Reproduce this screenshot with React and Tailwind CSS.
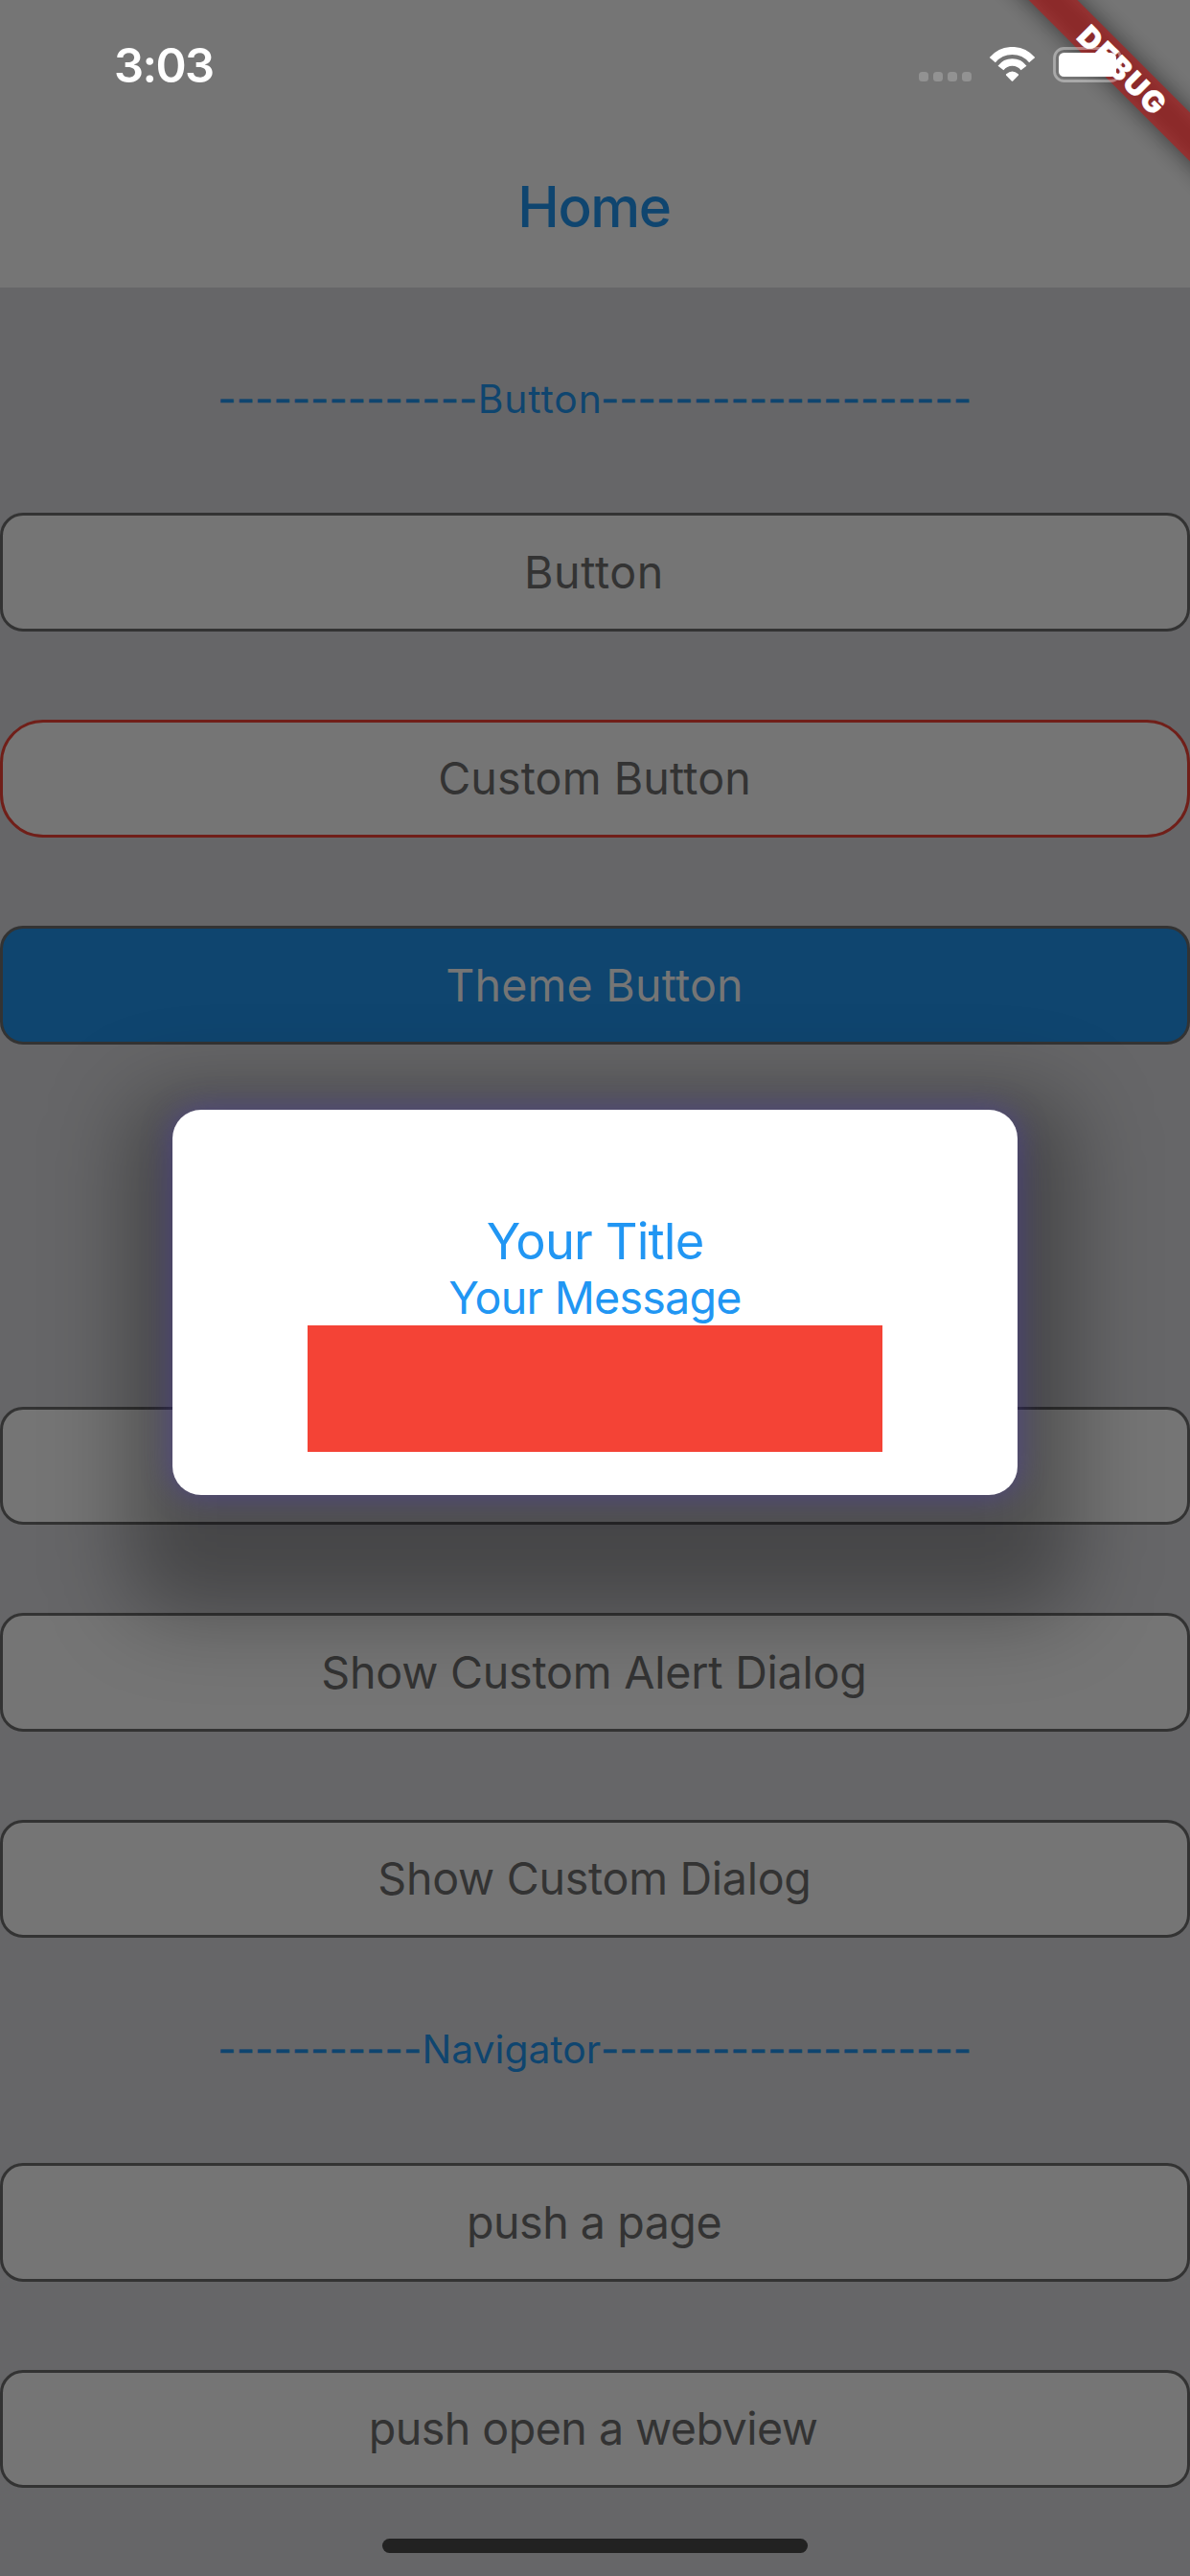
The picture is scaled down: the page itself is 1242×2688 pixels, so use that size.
function StatusBar() {
  return (
    <div className="flex h-[136px] justify-between pl-[119px] pr-[66px]">
      <span className="h-[136px] pt-px text-[48.8px] leading-[136px] font-semibold tracking-[-1.6px] text-white">3:03</span>
      <div className="flex pt-[49px]">
        <div className="mt-[26px] flex gap-[5px]">
          {[0, 1, 2, 3].map((dot) => (
            <span key={dot} className="size-[10px] rounded-[3.5px] bg-[#929292]" />
          ))}
        </div>
        <svg className="relative z-20 ml-[18px] h-[38px] w-[49px]" viewBox="0 0 49 38" fill="none">
          <path d="M3.8 13.6 A27 27 0 0 1 45.2 13.6" stroke="#fff" strokeWidth="8" />
          <path d="M12.5 22 A15 15 0 0 1 36.5 22" stroke="#fff" strokeWidth="7.4" />
          <path d="M18.2 28.2 Q24.5 22.6 30.8 28.2 Q31.5 29 30.8 29.8 L25.2 35.4 Q24.5 36 23.8 35.4 L18.2 29.8 Q17.5 29 18.2 28.2 Z" fill="#fff" />
        </svg>
        <svg className="relative z-20 ml-[18px] h-[37px] w-[77px]" viewBox="0 0 77 37" fill="none">
          <rect x="1.5" y="1.5" width="69" height="34" rx="10" stroke="#fff" strokeOpacity="0.38" strokeWidth="2.8" />
          <rect x="6" y="6" width="60" height="25" rx="5.5" fill="#fff" />
        </svg>
      </div>
    </div>
  );
}

function DebugBanner() {
  return (
    <div className="absolute top-0 right-0 z-10 size-[300px] overflow-hidden">
      <div className="absolute top-[53.2px] left-[-22.4px] h-[36px] w-[500px] rotate-45">
        <div className="absolute inset-0 bg-black/50 blur-[12px]" />
        <div className="absolute inset-0 flex items-center justify-center bg-[#B71C1C]/63 pl-[6px] text-[31px] leading-none font-black tracking-[1.9px] text-white [-webkit-text-stroke:0.4px_#fff]">
          DEBUG
        </div>
      </div>
    </div>
  );
}

function Section({ left, title, right, titleClass }) {
  return (
    <div className="flex h-[235px] items-center justify-center pb-px text-[40.8px] whitespace-nowrap text-[#0f456f]">
      <span className="tracking-[0.6px] [-webkit-text-stroke:0.6px_#0f456f]">{left}</span>
      <span className={titleClass}>{title}</span>
      <span className="tracking-[0.6px] [-webkit-text-stroke:0.6px_#0f456f]">{right}</span>
    </div>
  );
}

function Button({ children, className = "rounded-[24px] border-[#333333] bg-[#757575] text-[#333333]", tracking }) {
  return (
    <button className={"flex h-[123.5px] w-full shrink-0 items-center justify-center border-3 pt-[2px] text-[46.6px] whitespace-nowrap " + className}>
      <span className={tracking}>{children}</span>
    </button>
  );
}

function Dialog() {
  return (
    <>
      <div className="absolute top-[1142px] left-[132px] h-[543px] w-[990px] rounded-[50px] bg-black/31 blur-[43px]" />
      <div className="absolute inset-x-[180px] top-[1158px] flex h-[402px] flex-col items-center rounded-[30px] bg-white pt-[105px] text-[#2196f3] shadow-[0_0_30px_2px_rgba(80,60,183,0.48)]">
        <h2 className="h-[64px] text-[52.4px] leading-[64px] tracking-[-0.86px]">Your Title</h2>
        <p className="h-[56px] text-[46.6px] leading-[54px] tracking-[-0.76px]">Your Message</p>
        <div className="h-[132px] w-[600px] bg-[#f44336]" />
      </div>
    </>
  );
}

export default function App() {
  return (
    <div className="relative h-[2688px] w-[1242px] overflow-hidden bg-[#666668] font-[Inter,sans-serif]">
      <header className="h-[300px] bg-[#757575]">
        <StatusBar />
        <h1 className="h-[160px] pr-[2px] text-center text-[58.4px] leading-[160px] font-medium tracking-[-1.4px] text-[#0f456f]">Home</h1>
      </header>
      <Section left="--------------" title="Button" right="--------------------" titleClass="mr-[-1.5px] tracking-[0.88px]" />
      <div className="flex flex-col gap-[92px]">
        <Button tracking="pr-[2px] tracking-[0.6px]">Button</Button>
        <Button className="rounded-[45px] border-[#701f19] bg-[#757575] text-[#333333]" tracking="pr-[1px] tracking-[0.11px]">Custom Button</Button>
        <Button className="rounded-[24px] border-[#333333] bg-[#0f456f] text-[#757575]" tracking="pr-[1px] tracking-[0.2px]">Theme Button</Button>
      </div>
      <div className="mt-[378px] flex flex-col gap-[92px]">
        <Button />
        <Button tracking="pr-[2px] tracking-[-0.22px]">Show Custom Alert Dialog</Button>
        <Button tracking="pr-[1px] tracking-[-0.29px]">Show Custom Dialog</Button>
      </div>
      <Section left="-----------" title="Navigator" right="--------------------" titleClass="tracking-normal" />
      <div className="flex flex-col gap-[92px]">
        <Button tracking="pr-[2px] tracking-[-0.48px]">push a page</Button>
        <Button tracking="pr-[4px] tracking-[-0.54px]">push open a webview</Button>
      </div>
      <div className="mx-auto mt-[53px] h-[15px] w-[444px] rounded-full bg-[#222222]" />
      <DebugBanner />
      <Dialog />
    </div>
  );
}
